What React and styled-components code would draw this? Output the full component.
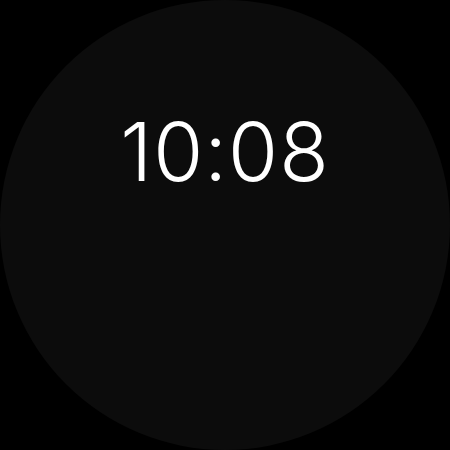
import React from "react";
import styled, { createGlobalStyle } from "styled-components";

const Global = createGlobalStyle`
  html, body { margin: 0; padding: 0; background: #000; }
  body { width: 450px; height: 450px; overflow: hidden; }
`;

const Face = styled.div`
  width: 450px;
  height: 450px;
  border-radius: 50%;
  background: #0c0c0c;
  display: flex;
  flex-direction: column;
  align-items: center;
  padding-top: 112px;
  box-sizing: border-box;
`;

const Time = styled.div`
  font-family: "Inter", "Lato", sans-serif;
  font-weight: 300;
  font-size: 81px;
  line-height: 1;
  color: #fff;
  letter-spacing: 1px;
`;

export default function App() {
  return (
    <>
      <Global />
      <Face>
        <Time>10:08</Time>
      </Face>
    </>
  );
}
